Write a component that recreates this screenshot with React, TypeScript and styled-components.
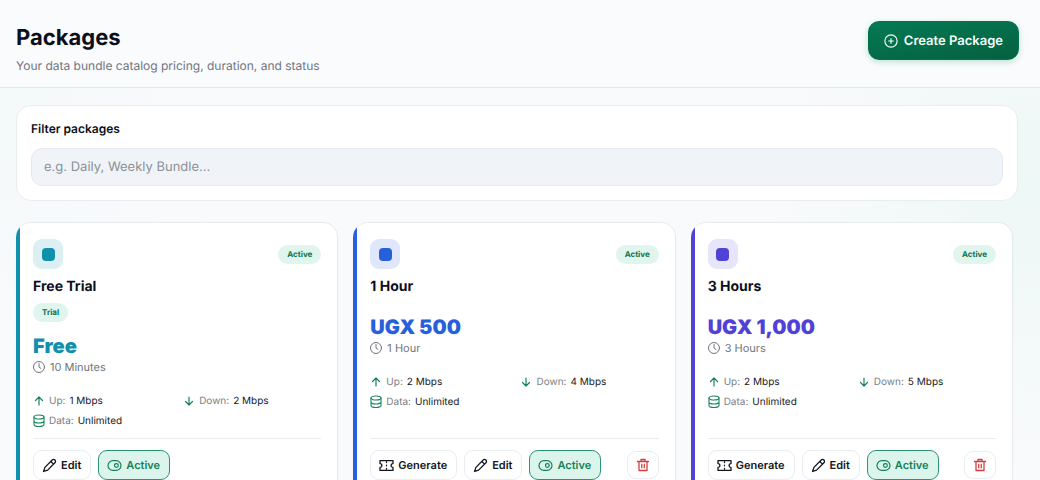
import React from "react";
import styled, { createGlobalStyle } from "styled-components";

const Global = createGlobalStyle`
  *, *::before, *::after { box-sizing: border-box; }
  body { margin: 0; font-family: Inter, "Liberation Sans", sans-serif; color: #0c0f1c; text-rendering: geometricPrecision; }
  h1, h2, p, dl, dd { margin: 0; }
  button, input { font: inherit; text-rendering: inherit; }
`;

const Page = styled.div`
  display: flex;
  flex-direction: column;
  height: 100vh;
  overflow: hidden;
  background:
    radial-gradient(circle at 100% 40%, #eef8f6 0, rgba(238, 248, 246, 0) 300px),
    radial-gradient(circle at 0 25%, #f4f9fa 0, rgba(244, 249, 250, 0) 240px),
    #f9fafc;
`;

const Header = styled.header`
  display: flex;
  flex: none;
  align-items: flex-start;
  justify-content: space-between;
  padding: 21px 21px 12px 16px;
  border-bottom: 1px solid #e2e8ec;
  background: #fafbfd;
`;

const Title = styled.h1`
  font-size: 22px;
  line-height: 35px;
  font-weight: 700;
`;

const Subtitle = styled.p`
  font-size: 12px;
  line-height: 19px;
  color: #70757d;
`;

const CreateButton = styled.button`
  display: flex;
  align-items: center;
  gap: 6px;
  height: 39px;
  padding: 0 15px;
  border: 1px solid #05704c;
  border-radius: 11px;
  background: linear-gradient(170deg, #047a54, #05603f);
  box-shadow: 0 2px 6px rgba(5, 150, 105, 0.25);
  color: #f4fffa;
  font-size: 13px;
  font-weight: 600;
`;

const Content = styled.main`
  flex: 1;
  min-height: 0;
  overflow-y: auto;
  scrollbar-width: none;
  padding: 17px 22px 17px 16px;
`;

const FilterPanel = styled.section`
  display: flex;
  flex-direction: column;
  gap: 11px;
  padding: 14px;
  border: 1px solid #e8edf0;
  border-radius: 15px;
  background: #fff;
`;

const FilterLabel = styled.label`
  font-size: 12px;
  line-height: 17px;
  font-weight: 600;
`;

const FilterInput = styled.input`
  width: 100%;
  height: 38px;
  padding: 0 12px;
  border: 1px solid #e6eaee;
  border-radius: 11px;
  background: #f0f4f8;
  font-size: 13px;
  &::placeholder { color: #8b9097; opacity: 1; }
`;

const Grid = styled.div`
  display: grid;
  grid-template-columns: repeat(3, minmax(0, 1fr));
  gap: 15px;
  margin-top: 21px;
  padding-right: 5px;
`;

const Card = styled.article<{ $accent: string }>`
  display: flex;
  flex-direction: column;
  overflow: hidden;
  padding: 16px 16px 16px 17px;
  border: 1px solid #e6eaef;
  border-left: 0;
  border-radius: 15px;
  background: linear-gradient(to right, ${(p) => p.$accent} 4px, #fff 4px);
  box-shadow: 0 1px 2px rgba(15, 23, 42, 0.04);
`;

const CardTop = styled.div`
  display: flex;
  align-items: center;
  justify-content: space-between;
`;

const Swatch = styled.span<{ $accent: string; $tint: string }>`
  display: grid;
  place-items: center;
  width: 30px;
  height: 30px;
  border-radius: 9px;
  background: ${(p) => p.$tint};
  &::before {
    content: "";
    width: 13px;
    height: 13px;
    border-radius: 4px;
    background: ${(p) => p.$accent};
  }
`;

const Badge = styled.span`
  padding: 0 9px;
  border-radius: 10px;
  background: #e0f5ee;
  color: #08734f;
  font-size: 8px;
  line-height: 19px;
  font-weight: 700;
`;

const CardName = styled.h2`
  margin-top: 8px;
  font-size: 14px;
  line-height: 20px;
  font-weight: 700;
`;

const TrialSlot = styled.div`
  display: flex;
  padding: 6px 0 8px;
`;

const PriceBlock = styled.div`
  padding-top: 4px;
`;

const Price = styled.p<{ $accent: string; $spaced: boolean }>`
  margin-top: ${(p) => (p.$spaced ? "14px" : "0")};
  color: ${(p) => p.$accent};
  font-size: 20px;
  line-height: 24px;
  font-weight: 900;
`;

const Duration = styled.p`
  display: flex;
  align-items: center;
  gap: 5px;
  color: #70757d;
  font-size: 11px;
  line-height: 18px;
`;

const Specs = styled.dl`
  display: grid;
  grid-template-columns: 1fr 1fr;
  column-gap: 12px;
  row-gap: 4px;
  margin-top: 17px;
  padding-bottom: 9px;
`;

const Spec = styled.div`
  display: flex;
  align-items: center;
  gap: 4px;
  font-size: 10px;
  line-height: 16px;
  color: #16191f;
  svg { color: #16855b; }
  dt { color: #7b8087; }
`;

const Actions = styled.div`
  display: flex;
  align-items: center;
  gap: 7px;
  margin-top: auto;
  padding-top: 11px;
  border-top: 1px solid #e9ecf0;
`;

const ActionButton = styled.button<{ $on?: boolean }>`
  display: flex;
  align-items: center;
  gap: 5px;
  height: 30px;
  padding: 0 9px;
  border: 1px solid ${(p) => (p.$on ? "#2d9470" : "#e9ecf0")};
  border-radius: 9px;
  background: ${(p) => (p.$on ? "#dcf5ec" : "#fff")};
  color: ${(p) => (p.$on ? "#14805a" : "#12151c")};
  font-size: 11px;
  font-weight: 600;
`;

const DeleteButton = styled.button`
  display: grid;
  place-items: center;
  width: 32px;
  height: 28px;
  margin-left: auto;
  padding: 0;
  border: 1px solid #e9ecf0;
  border-radius: 9px;
  background: #fff;
  color: #d23f3f;
`;

type IconName = "plus" | "clock" | "up" | "down" | "data" | "ticket" | "edit" | "toggle" | "trash";

const shapes: Record<IconName, React.ReactNode> = {
  plus: <><circle cx="12" cy="12" r="10.500" /><path d="M12 8v8M8 12h8" /></>,
  clock: <><circle cx="12" cy="12" r="11" /><path d="M12 5v7l4 3" /></>,
  up: <path d="M12 20V4M5 11l7-7 7 7" />,
  down: <path d="M12 4v16M5 13l7 7 7-7" />,
  data: <><ellipse cx="12" cy="4" rx="10" ry="4" /><path d="M2 4v15c0 2 4 4 10 4s10-2 10-4V4M2 12c0 2 4 4 10 4s10-2 10-4" /></>,
  ticket: <path d="M0 3h24v5.500a3.500 3.500 0 0 0 0 7V21H0v-5.500a3.500 3.500 0 0 0 0-7zM12 5.500v1M12 11.500v1M12 17.500v1" />,
  edit: <path d="M1 23l2.500-7.500L17 2a3.300 3.300 0 0 1 5 5L8.500 20.500zM14.500 4.500l5 5" />,
  toggle: <><rect x="0" y="3" width="24" height="18" rx="9" /><circle cx="15.500" cy="12" r="3.500" /></>,
  trash: <path d="M1 5h22M8 5V1h8v4M4 5v18h16V5M9.500 11v6.500M14.500 11v6.500" />,
};

const Icon = ({ name, size, weight = 2 }: { name: IconName; size: number; weight?: number }) => (
  <svg width={size} height={size} viewBox="0 0 24 24" overflow="visible" fill="none" stroke="currentColor" strokeWidth={weight} strokeLinecap="round" strokeLinejoin="round" aria-hidden="true">
    {shapes[name]}
  </svg>
);

const packages = [
  { name: "Free Trial", price: "Free", duration: "10 Minutes", up: "1 Mbps", down: "2 Mbps", accent: "#1190ae", tint: "#dceff2", trial: true },
  { name: "1 Hour", price: "UGX 500", duration: "1 Hour", up: "2 Mbps", down: "4 Mbps", accent: "#2860dc", tint: "#e1e7fb", trial: false },
  { name: "3 Hours", price: "UGX 1,000", duration: "3 Hours", up: "2 Mbps", down: "5 Mbps", accent: "#5142d6", tint: "#e6e5fa", trial: false },
];

export default function App() {
  return (
    <Page>
      <Global />
      <Header>
        <div>
          <Title>Packages</Title>
          <Subtitle>Your data bundle catalog pricing, duration, and status</Subtitle>
        </div>
        <CreateButton type="button"><Icon name="plus" size={14} />Create Package</CreateButton>
      </Header>
      <Content>
        <FilterPanel>
          <FilterLabel htmlFor="filter">Filter packages</FilterLabel>
          <FilterInput id="filter" type="text" placeholder="e.g. Daily, Weekly Bundle..." />
        </FilterPanel>
        <Grid>
          {packages.map((p) => (
            <Card key={p.name} $accent={p.accent}>
              <CardTop>
                <Swatch $accent={p.accent} $tint={p.tint} />
                <Badge>Active</Badge>
              </CardTop>
              <CardName>{p.name}</CardName>
              {p.trial && <TrialSlot><Badge>Trial</Badge></TrialSlot>}
              <PriceBlock>
                <Price $accent={p.accent} $spaced={!p.trial}>{p.price}</Price>
                <Duration><Icon name="clock" size={12} />{p.duration}</Duration>
              </PriceBlock>
              <Specs>
                <Spec><Icon name="up" size={12} weight={2.4} /><dt>Up:</dt><dd>{p.up}</dd></Spec>
                <Spec><Icon name="down" size={12} weight={2.4} /><dt>Down:</dt><dd>{p.down}</dd></Spec>
                <Spec><Icon name="data" size={12} weight={2.2} /><dt>Data:</dt><dd>Unlimited</dd></Spec>
              </Specs>
              <Actions>
                {!p.trial && <ActionButton type="button"><Icon name="ticket" size={13} weight={2.4} />Generate</ActionButton>}
                <ActionButton type="button"><Icon name="edit" size={13} weight={2.4} />Edit</ActionButton>
                <ActionButton type="button" $on aria-pressed="true"><Icon name="toggle" size={13} weight={2.2} />Active</ActionButton>
                {!p.trial && <DeleteButton type="button" aria-label={`Delete ${p.name}`}><Icon name="trash" size={12} weight={2.6} /></DeleteButton>}
              </Actions>
            </Card>
          ))}
        </Grid>
      </Content>
    </Page>
  );
}
